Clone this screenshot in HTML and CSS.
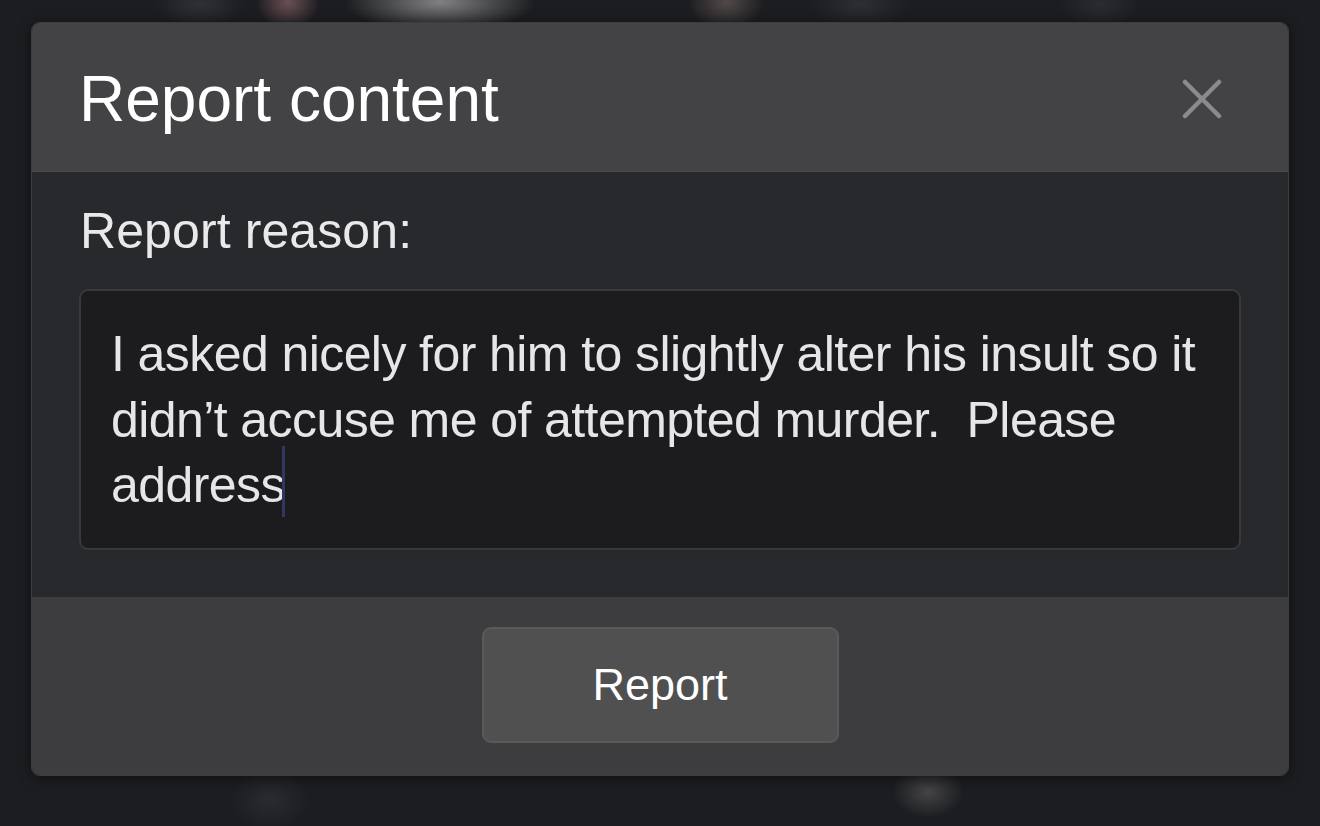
FILE: index.html
```html
<!DOCTYPE html>
<html lang="en">
<head>
    <meta charset="UTF-8">
    <meta name="viewport" content="width=device-width, initial-scale=1.0">
    <title>Report content</title>
    <link rel="stylesheet" href="styles.css">
</head>
<body>
    <!-- Report Dialog -->
    <div class="dialog">
        <div class="dialog-header">
            <h1>Report content</h1>
            <button class="close-btn" aria-label="Close">
                <svg viewBox="0 0 40 40" width="40" height="40">
                    <path d="M3 3L37 37M37 3L3 37" stroke="#8b8b8d" stroke-width="4.5" stroke-linecap="round" fill="none"/>
                </svg>
            </button>
        </div>

        <div class="dialog-body">
            <label class="reason-label">Report reason:</label>
            <div class="reason-input">I asked nicely for him to slightly alter his insult so it didn’t accuse me of attempted murder.  Please address<span class="caret"></span></div>
        </div>

        <div class="dialog-footer">
            <button class="report-btn">Report</button>
        </div>
    </div>
</body>
</html>
```

FILE: styles.css
```css
/* Basic Reset */
* {
    margin: 0;
    padding: 0;
    box-sizing: border-box;
}

/* Blurred page behind the dialog */
body {
    font-family: 'Liberation Sans', Arial, sans-serif;
    height: 100vh;
    overflow: hidden;
    padding: 22px 31px 0 31px;
    background:
        radial-gradient(ellipse 95px 30px at 440px 2px, rgba(140, 140, 142, 0.9), transparent),
        radial-gradient(ellipse 32px 28px at 288px 2px, rgba(120, 88, 92, 0.85), transparent),
        radial-gradient(ellipse 38px 28px at 726px 2px, rgba(100, 88, 86, 0.75), transparent),
        radial-gradient(ellipse 45px 24px at 200px 4px, rgba(60, 62, 66, 0.6), transparent),
        radial-gradient(ellipse 50px 24px at 860px 4px, rgba(56, 58, 62, 0.6), transparent),
        radial-gradient(ellipse 40px 24px at 1100px 4px, rgba(52, 54, 58, 0.6), transparent),
        radial-gradient(ellipse 36px 26px at 928px 792px, rgba(78, 78, 80, 0.8), transparent),
        radial-gradient(ellipse 40px 30px at 270px 800px, rgba(48, 49, 52, 0.7), transparent),
        #1c1d20;
}

/* Dialog */
.dialog {
    width: 1258px;
    height: 754px;
    border: 1px solid #3d3e41;
    border-radius: 9px;
    overflow: hidden;
    display: flex;
    flex-direction: column;
    box-shadow: 0 2px 14px rgba(0, 0, 0, 0.45);
}

.dialog-header {
    height: 149px;
    flex-shrink: 0;
    background: #434345;
    border-bottom: 1px solid #4a4a4c;
    display: flex;
    align-items: center;
    justify-content: space-between;
    padding: 3px 66px 0 47px;
}

h1 {
    font-size: 64px;
    font-weight: normal;
    color: #ffffff;
    letter-spacing: 0;
}

.close-btn {
    background: none;
    border: none;
    width: 40px;
    height: 40px;
    display: flex;
    cursor: pointer;
}

/* Body */
.dialog-body {
    background: #28292c;
    padding: 29px 47px 47px 47px;
    display: flex;
    flex-direction: column;
    gap: 28px;
}

.reason-label {
    font-size: 50px;
    line-height: 60px;
    color: #e9e9eb;
    margin-left: 1px;
    letter-spacing: 0.1px;
}

.reason-input {
    height: 261px;
    background: #1c1c1f;
    border: 2px solid #38393c;
    border-radius: 9px;
    padding: 31px 30px 0 30px;
    font-size: 50px;
    line-height: 65.5px;
    color: #e6e6e8;
    white-space: pre-wrap;
    letter-spacing: -0.58px;
}

/* Text cursor, kept inside the line box */
.caret {
    display: inline-block;
    width: 3px;
    height: 71px;
    background: #2f3764;
    vertical-align: -15px;
    margin-top: -14px;
    margin-left: -3px;
}

/* Footer */
.dialog-footer {
    flex: 1;
    background: #3d3d3f;
    display: flex;
    justify-content: center;
    padding-top: 30px;
}

.report-btn {
    width: 357px;
    height: 116px;
    background: #505050;
    border: 2px solid #59595a;
    border-radius: 9px;
    font-family: 'Liberation Sans', Arial, sans-serif;
    font-size: 45px;
    color: #ffffff;
    cursor: pointer;
}
```
